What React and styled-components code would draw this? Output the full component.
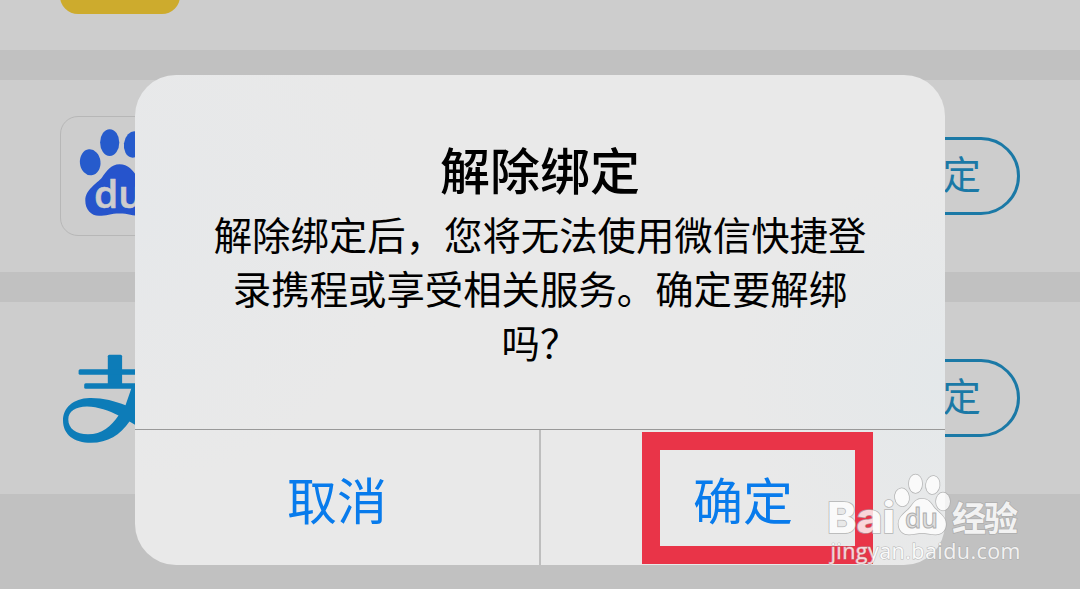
import styled, { createGlobalStyle } from 'styled-components';

const BaiduLogo = () => (
  <svg width="118" height="118" viewBox="61 117 118 118">
    <g fill="#265bcc">
      <ellipse cx="90.2" cy="162.3" rx="10.3" ry="13" transform="rotate(-6 90.2 162.3)" />
      <ellipse cx="109.7" cy="142.6" rx="9.6" ry="13.4" />
      <ellipse cx="133.5" cy="144.5" rx="9.6" ry="13.2" transform="rotate(8 133.5 144.5)" />
      <ellipse cx="151" cy="165" rx="10" ry="13" />
      <path
        fill="#2654cc"
        d="M119.5 164.3C128 164.3 133 170.5 137 176.5C141 183 154 190 154 201C154 210 148 215.8 140 215.8C133 215.8 128 213.4 119.5 213.4C111 213.4 106 215.8 99 215.8C91 215.8 85.3 209.5 85.3 200.5C85.3 189.5 97 183.5 102 177.5C106.5 171 111 164.3 119.5 164.3Z"
      />
    </g>
    <LogoText x="94" y="208" textLength="49" lengthAdjust="spacingAndGlyphs">
      du
    </LogoText>
  </svg>
);

const AlipayLogo = () => (
  <svg width="120" height="120" viewBox="60 338 120 120">
    <g fill="#0d7cb8">
      <rect x="107.8" y="354.8" width="14.3" height="32" rx="1.5" />
      <rect x="78.6" y="369.3" width="72" height="5.4" rx="1.5" />
      <rect x="84.2" y="383.3" width="62" height="5.4" rx="1.5" />
      <path
        fillRule="evenodd"
        d="M131.5 388L125.5 405.3C115 401 102 397.7 89.5 398C73 398.5 63 408 63 420.5C63 434.5 74 442.8 91 442.8C108 442.8 120 435 129.5 421.5C143 430 156 436 174 440L178 426C163 423 152 419 142 413L148 388ZM118.5 415.5C111 426.5 102 434.3 88 434.3C76 434.3 68.3 428.5 68.3 419.5C68.3 411.5 75.5 406.6 87 406.6C98 406.6 109 411 118.5 415.5Z"
      />
    </g>
  </svg>
);

const Watermark = () => (
  <WatermarkSvg width="210" height="105" viewBox="820 465 210 105">
    <g fill="#fff" stroke="#a9a9a9" strokeWidth="1.5" paintOrder="stroke">
      <ellipse cx="902" cy="497.3" rx="7" ry="9" transform="rotate(-8 902 497.3)" />
      <ellipse cx="915.5" cy="483.7" rx="6.6" ry="9.3" />
      <ellipse cx="932.8" cy="485" rx="6.8" ry="9" transform="rotate(8 932.8 485)" />
      <ellipse cx="943" cy="501.5" rx="7" ry="9" />
      <path d="M922 498.8C928.5 498.8 931 503 934 507.5C937.5 512 946 516 946 524C946 530.5 941.5 534.5 935.5 534.5C930.5 534.5 927 533 922 533C917 533 914 534.5 909 534.5C902.5 534.5 898.5 530 898.5 523.5C898.5 515.5 907 512 910.5 507C913.5 503 916 498.8 922 498.8Z" />
      <BrandText x="827" y="533" textLength="68" lengthAdjust="spacingAndGlyphs">
        Bai
      </BrandText>
      <CjkText x="952" y="531" textLength="66">
        经验
      </CjkText>
      <UrlText x="830.5" y="558.5" textLength="190">
        jingyan.baidu.com
      </UrlText>
    </g>
    <PawText x="905" y="528" textLength="33" lengthAdjust="spacingAndGlyphs">
      du
    </PawText>
  </WatermarkSvg>
);

const App = () => {
  return (
    <>
      <GlobalStyle />
      <Page>
        <FirstRow>
          <YellowIcon />
        </FirstRow>
        <Row>
          <LogoBox>
            <BaiduLogo />
          </LogoBox>
          <BindButton>绑定</BindButton>
        </Row>
        <Row>
          <AlipayLogo />
          <BindButton>绑定</BindButton>
        </Row>
        <Dialog role="dialog">
          <DialogBody>
            <Title>解除绑定</Title>
            <Message>
              解除绑定后，您将无法使用微信快捷登
              <br />
              录携程或享受相关服务。确定要解绑
              <br />
              吗？
            </Message>
          </DialogBody>
          <Actions>
            <ActionButton>取消</ActionButton>
            <Divider />
            <ActionButton>确定</ActionButton>
          </Actions>
        </Dialog>
        <Highlight />
        <Watermark />
      </Page>
    </>
  );
};

export default App;

const GlobalStyle = createGlobalStyle`
  * {
    box-sizing: border-box;
  }

  body {
    margin: 0;
    overflow: hidden;
    font-family: 'Noto Sans CJK SC', sans-serif;
  }
`;

const Page = styled.div`
  position: relative;
  display: flex;
  flex-direction: column;
  gap: 30px;
  width: 1080px;
  height: 589px;
  overflow: hidden;
  background-color: #c1c1c1;
`;

const Row = styled.div`
  display: flex;
  flex-shrink: 0;
  align-items: center;
  justify-content: space-between;
  height: 192px;
  padding: 0 60px;
  background-color: #cdcdcd;
`;

const FirstRow = styled(Row)`
  height: 50px;
  align-items: flex-end;
  padding-bottom: 36px;
`;

const YellowIcon = styled.div`
  flex-shrink: 0;
  width: 120px;
  height: 120px;
  border-radius: 18px;
  background-color: #cdab2d;
`;

const LogoBox = styled.div`
  width: 120px;
  height: 120px;
  border: 1px solid #b7b7b7;
  border-radius: 18px;
  overflow: hidden;
`;

const LogoText = styled.text`
  font-family: 'Open Sans', sans-serif;
  font-size: 38px;
  font-weight: 600;
  fill: #cdcdcd;
  stroke: #cdcdcd;
  stroke-width: 0.6px;
`;

const BindButton = styled.button`
  height: 78px;
  padding: 0 36px 8px;
  border: 3px solid #1b79a6;
  border-radius: 39px;
  background: none;
  color: #1b79a6;
  font-family: inherit;
  font-size: 38.4px;
  font-weight: 400;
  line-height: 64px;
`;

const Dialog = styled.div`
  position: absolute;
  top: 75px;
  left: 135px;
  display: flex;
  flex-direction: column;
  width: 810px;
  height: 490px;
  border-radius: 41px;
  overflow: hidden;
  background:
    radial-gradient(circle at 0 30%, #e6e8ea, transparent 30%),
    radial-gradient(circle at 100% 62%, #e4e8ea, transparent 24%),
    #e9e9e9;
`;

const DialogBody = styled.div`
  height: 354px;
  padding-top: 59px;
  text-align: center;
  color: #000;
`;

const Title = styled.h1`
  margin: 0;
  font-size: 50px;
  font-weight: 500;
  line-height: 68px;
`;

const Message = styled.p`
  margin: 4px 0 0;
  font-size: 38.4px;
  font-weight: 400;
  line-height: 54px;
  white-space: nowrap;
`;

const Actions = styled.div`
  display: flex;
  flex: 1;
  border-top: 1px solid #999;
`;

const ActionButton = styled.button`
  flex: 1;
  padding: 0;
  border: none;
  background: none;
  color: #087bec;
  font-family: inherit;
  font-size: 50px;
  font-weight: 400;
`;

const Divider = styled.div`
  width: 2px;
  background-color: #bebebe;
`;

const Highlight = styled.div`
  position: absolute;
  top: 432px;
  left: 642px;
  width: 231px;
  height: 132px;
  border: 18px solid #e93448;
`;

const WatermarkSvg = styled.svg`
  position: absolute;
  top: 465px;
  left: 820px;
  opacity: 0.8;
`;

const BrandText = styled.text`
  font-family: Inter, sans-serif;
  font-size: 42px;
  font-weight: 800;
`;

const CjkText = styled.text`
  font-size: 34px;
  font-weight: 700;
`;

const UrlText = styled.text`
  font-family: 'Open Sans', sans-serif;
  font-size: 21.5px;
  font-weight: 500;
  stroke-width: 1px;
`;

const PawText = styled.text`
  font-family: 'Open Sans', sans-serif;
  font-size: 27px;
  font-weight: 600;
  fill: #ddd;
  stroke: #a0a0a0;
  stroke-width: 1px;
`;
